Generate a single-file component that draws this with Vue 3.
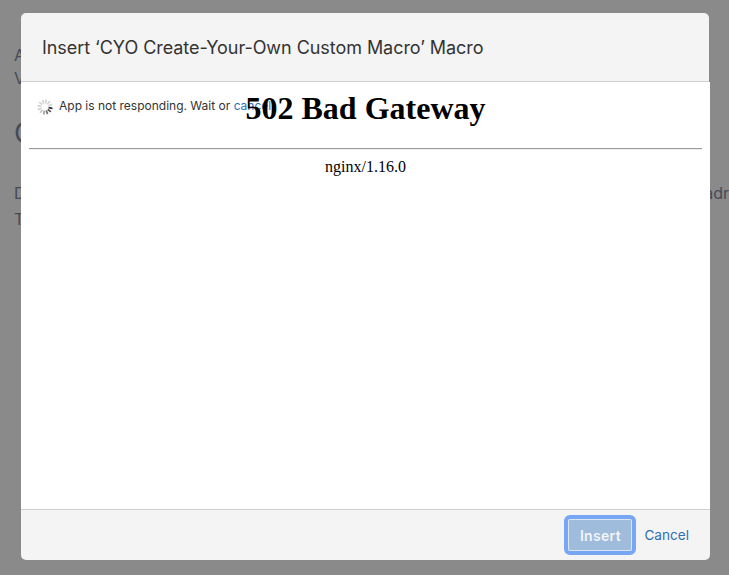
<script setup>
const shades = ['#2e2e2e', '#4d4d4d', '#757575', '#a0a0a0', '#c2c2c2', '#d0d0d0', '#d4d4d4', '#d4d4d4', '#d4d4d4', '#d4d4d4', '#d4d4d4', '#d4d4d4']
const spokes = shades.map((color, i) => ({ angle: i * 30, color }))
</script>

<template>
  <div class="page">
    <div class="behind">
      <p class="line small">A</p>
      <p class="line small">V</p>
      <p class="line big">C</p>
      <div class="row">
        <span>D</span>
        <span>adr</span>
      </div>
      <p class="line t">T</p>
    </div>

    <div class="dialog">
      <header class="head">Insert ‘CYO Create-Your-Own Custom Macro’ Macro</header>
      <main class="body">
        <div class="notice">
          <svg class="spin" width="16" height="16" viewBox="0 0 16 16">
            <line
              v-for="s in spokes"
              :key="s.angle"
              x1="8" y1="0.4" x2="8" y2="4.4"
              :stroke="s.color"
              stroke-width="1.7"
              :transform="`rotate(${s.angle + 100} 8 8)`"
            />
          </svg>
          <span class="msg">App is not responding. Wait or <a class="link">cancel</a>.</span>
        </div>
        <div class="frame">
          <h1>502 Bad Gateway</h1>
          <hr />
          <p>nginx/1.16.0</p>
        </div>
      </main>
      <footer class="foot">
        <button class="insert">Insert</button>
        <a class="cancel">Cancel</a>
      </footer>
    </div>
  </div>
</template>

<style>
html, body { margin: 0; height: 100%; overflow: hidden; }
</style>

<style scoped>
.page {
  position: relative;
  width: 729px;
  height: 575px;
  overflow: hidden;
  background: #8a8a8a;
  font-family: "Inter", "Liberation Sans", sans-serif;
}
.behind { padding: 44px 0 0 14px; color: #454a57; font-size: 16px; }
.line { margin: 0; line-height: 23px; }
.big { font-size: 28px; line-height: 40px; margin-top: 23px; }
.row { display: flex; justify-content: space-between; margin-top: 27px; line-height: 26px; width: 715px; }
.t { line-height: 26px; }

.dialog {
  position: absolute;
  left: 21px;
  top: 13px;
  width: 689px;
  height: 547px;
  display: flex;
  flex-direction: column;
  border-radius: 5px;
  overflow: hidden;
}
.head {
  box-sizing: border-box;
  height: 69px;
  margin-right: 1px;
  padding: 0 21px;
  display: flex;
  align-items: center;
  background: #f4f4f4;
  border-bottom: 1px solid #cfcfcf;
  border-top-right-radius: 5px;
  color: #333;
  font-size: 18px;
  letter-spacing: -0.05px;
}
.body { position: relative; flex: 1; background: #fff; }
.notice {
  position: absolute;
  left: 16px;
  top: 17px;
  display: flex;
  align-items: center;
  gap: 6px;
  font-size: 12px;
  color: #333;
}
.msg { margin-top: -3px; }
.link { color: #2f6fb5; }
.frame { padding: 8px 8px 0; text-align: center; color: #000; font-family: "Liberation Serif", serif; }
.frame h1 { margin: 0; font-size: 32px; line-height: 37px; font-weight: 700; position: relative; }
.frame hr { margin: 21px 0 0; border: 0; border-top: 1px solid #9a9a9a; border-bottom: 1px solid #eee; }
.frame p { margin: 8px 0 0; font-size: 16px; line-height: 18px; }
.foot {
  box-sizing: border-box;
  height: 51px;
  display: flex;
  align-items: center;
  justify-content: flex-end;
  gap: 12px;
  padding: 0 21px 0 0;
  background: #f4f4f4;
  border-top: 1px solid #cfcfcf;
}
.insert {
  box-sizing: border-box;
  width: 64px;
  height: 32px;
  border: 1px solid #dce6f2;
  border-radius: 2px;
  outline: 4px solid #77a6f5;
  outline-offset: 0;
  background: #9fbcdc;
  color: #f2f5f9;
  font: 600 14px "Inter", "Liberation Sans", sans-serif;
  letter-spacing: 0.3px;
  padding: 0;
}
.cancel { color: #2f6fb5; font-size: 13.6px; }
</style>
